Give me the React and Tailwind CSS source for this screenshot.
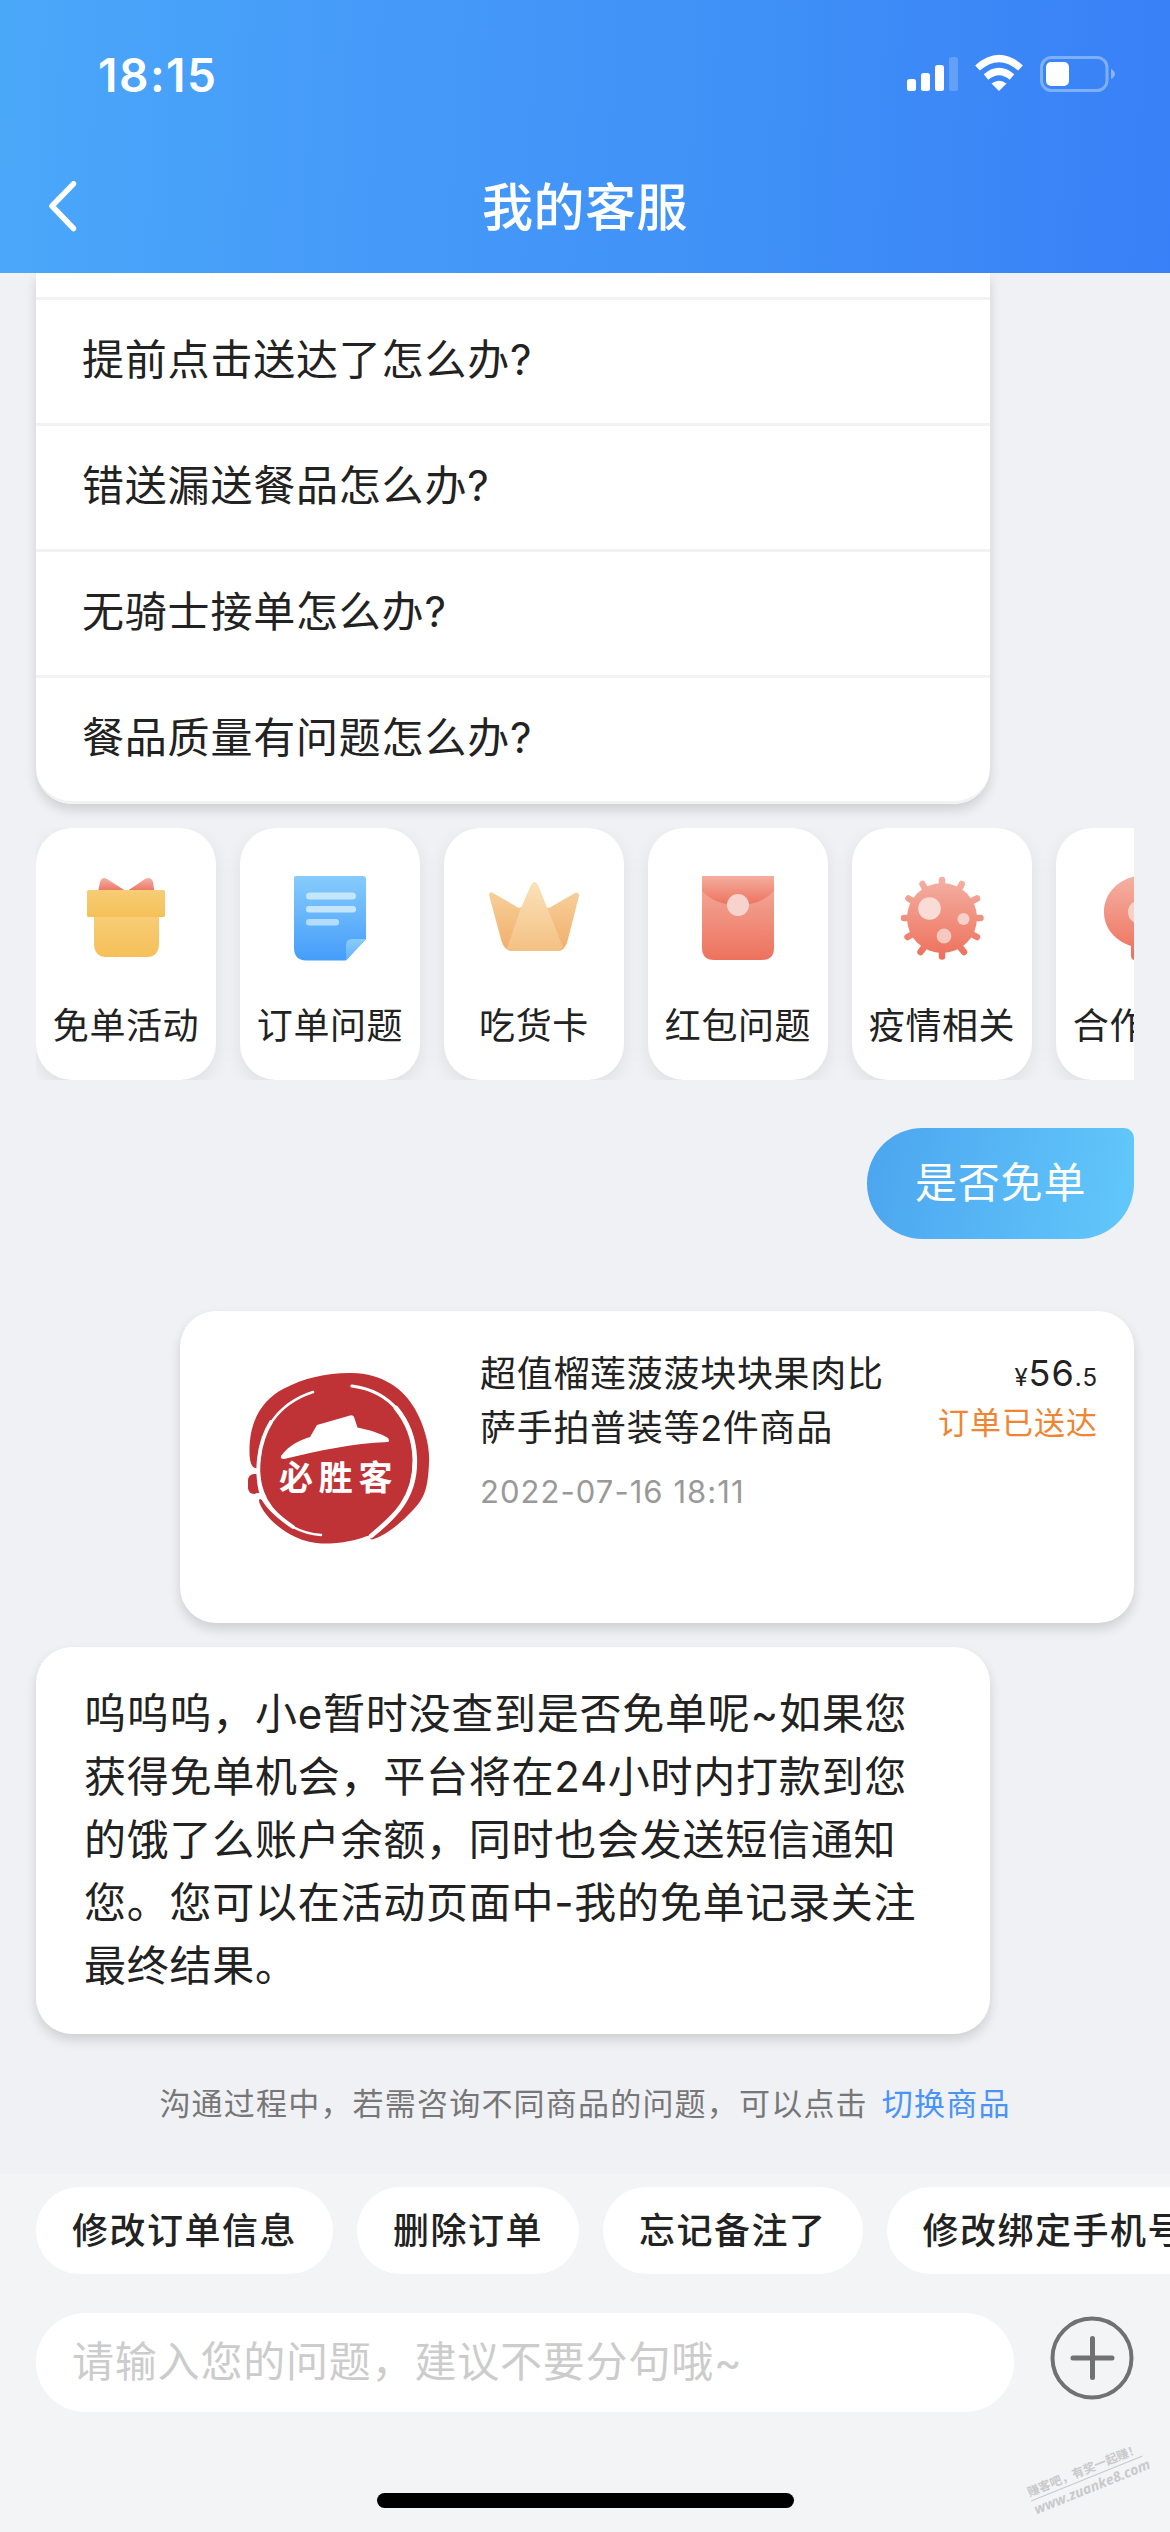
function Grad({ id, from, to }) {
  return (
    <linearGradient id={id} x1="0" y1="0" x2="0" y2="1">
      <stop offset="0" stopColor={from} />
      <stop offset="1" stopColor={to} />
    </linearGradient>
  );
}

function GiftIcon() {
  return (
    <svg className="size-[108px]" viewBox="0 0 108 108">
      <defs>
        <Grad id="bow" from="#f4b0a4" to="#ea705c" />
        <Grad id="lid" from="#f7cd76" to="#f5c058" />
      </defs>
      <path d="M26 38L28 28Q30 22 35 25L54.500 37.500L73 25Q79 22 81 28L82.500 38Z" fill="url(#bow)" />
      <path d="M22 62H87V91Q86 103 75 103H34Q23 103 22 91Z" fill="url(#lid)" />
      <rect x="15" y="36" width="78" height="27" rx="1.500" fill="url(#lid)" />
    </svg>
  );
}

function OrderIcon() {
  return (
    <svg className="size-[108px]" viewBox="0 0 108 108">
      <defs>
        <Grad id="doc" from="#86cbfc" to="#449dfa" />
        <Grad id="fold" from="#8acbfb" to="#62b3fb" />
      </defs>
      <path d="M20 22H87Q90 22 90 25V85L70 106.500H30Q18 106 18 94V24Q18 22 20 22Z" fill="url(#doc)" />
      <path d="M90 85L70 106V91Q70 85 76 85Z" fill="url(#fold)" />
      <rect x="30" y="38.500" width="50" height="7" rx="3.500" fill="#c4e6fc" />
      <rect x="30" y="52" width="50" height="6.500" rx="3" fill="#c4e6fc" />
      <rect x="30" y="65" width="33" height="6.500" rx="3" fill="#b4dcfc" />
    </svg>
  );
}

function CrownIcon() {
  return (
    <svg className="size-[108px]" viewBox="0 0 108 108">
      <defs>
        <Grad id="crownSide" from="#f6cf9a" to="#f2ae6a" />
        <Grad id="crownMid" from="#fae2b8" to="#f4c084" />
      </defs>
      <path d="M9 41Q9.500 37 13 39L38 53.500Q41 55 44 50L64 50Q67 55 70 53.500L95 39Q99.500 37.500 99 42L87.500 87Q85 97 77 97H32Q24.500 96.500 21.500 87Z" fill="url(#crownSide)" />
      <path d="M51 31Q54.500 25 58 31L83 93Q80.500 97 76 97H33Q29 97 27 94L41 54Z" fill="url(#crownMid)" />
    </svg>
  );
}

function PacketIcon() {
  return (
    <svg className="size-[108px]" viewBox="0 0 108 108">
      <defs>
        <Grad id="packet" from="#f4ae9f" to="#ed725d" />
      </defs>
      <path d="M18 22H90V94Q90 106 78 106H30Q18 106 18 94Z" fill="url(#packet)" />
      <path d="M18 22H90V37Q77 51 54 51Q31 51 18 37Z" fill="url(#packet)" />
      <circle cx="54" cy="51" r="11" fill="#f7d3cd" />
    </svg>
  );
}

function VirusIcon() {
  return (
    <svg className="size-[108px]" viewBox="0 0 108 108">
      <defs>
        <linearGradient id="virus" gradientUnits="userSpaceOnUse" x1="0" y1="22" x2="0" y2="106">
          <stop offset="0" stopColor="#f4b2a5" />
          <stop offset="1" stopColor="#ed6f59" />
        </linearGradient>
      </defs>
      <g stroke="url(#virus)" strokeWidth="6.500" strokeLinecap="round">
        <path d="M54.010 26V102.500M16 64H92.500M34.500 30L40 40M73.800 30L68.500 40M20.500 44.500L30 50M89 44.500L78 50M19.500 83L30 77M89 83L78 77M32.500 98L40 88M76 98L68 88" />
      </g>
      <circle cx="54" cy="64" r="35" fill="url(#virus)" />
      <circle cx="41.500" cy="54.500" r="11.300" fill="#f9dcd6" />
      <circle cx="75.500" cy="65" r="6" fill="#f7d0c8" />
      <circle cx="56" cy="82" r="7.400" fill="#f6c8bf" />
    </svg>
  );
}

function PartnerIcon() {
  return (
    <svg className="size-[108px]" viewBox="0 0 108 108">
      <defs>
        <Grad id="partner" from="#f4b2a5" to="#ed6f59" />
      </defs>
      <path d="M54 21C30 21 12 37 12 58C12 75 24 87 39 92V101Q39 107 45 106L60 95C82 93 96 77 96 58C96 37 78 21 54 21Z" fill="url(#partner)" />
      <circle cx="48" cy="58" r="9" fill="none" stroke="#f7d0c8" strokeWidth="6" />
    </svg>
  );
}

function StoreLogo() {
  return (
    <svg className="ml-[66px] mt-[60px] h-[174px] w-[185px] shrink-0" viewBox="0 0 185 174">
      <g fill="#bf3337">
        <path d="M103 2C135 1 158 18 169 38C179 56 184 76 183 92C182 116 179 127 167 139C154 153 139 165 126 168.500Q122 168 125 165L121 165C108 170 92 173 75 172.500C46 171 20 149 13.500 132Q12 126 16 129L12 97Q3 99 3.500 78C4 45 20 27 37 18C58 7 80 2 103 2Z" />
        <rect x="2" y="103" width="14" height="20" rx="6" />
      </g>
      <g fill="none" stroke="#fff" strokeLinecap="round">
        <path d="M67 21C30 33 13 62 12.500 96C13 121 22 139 47 156Q60 163 75 164" strokeWidth="2.500" />
        <path d="M25 51C12 72 9 102 16 125Q22 139 47 156" strokeWidth="3.800" />
        <path d="M106 15C145 20 168 50 168.500 87C169 122 154 144 125 165" strokeWidth="3.200" />
        <path d="M150 37C174 66 174 108 156 134Q148 146 125 165" strokeWidth="4.600" />
        <path d="M5 100H12M9 125L12 124" strokeWidth="4" />
      </g>
      <path d="M35 85C43 74 54 69 64 66L71 54L104 44.500Q107 43.500 108 46L111.500 56.500C123 59 134 62 142 67Q144 70 142 71C106 72 73 80 38 88Q34 88 35 85Z" fill="#fff" />
      <text x="33" y="119" fill="#fff" fontSize="34" fontWeight="700" letterSpacing="5.800" fontFamily="Noto Sans CJK SC">必胜客</text>
    </svg>
  );
}

const questions = ["提前点击送达了怎么办?", "错送漏送餐品怎么办?", "无骑士接单怎么办?", "餐品质量有问题怎么办?"];

const topics = [
  { label: "免单活动", Icon: GiftIcon },
  { label: "订单问题", Icon: OrderIcon },
  { label: "吃货卡", Icon: CrownIcon },
  { label: "红包问题", Icon: PacketIcon },
  { label: "疫情相关", Icon: VirusIcon },
  { label: "合作咨询", Icon: PartnerIcon },
];

const replyLines = [
  "呜呜呜，小e暂时没查到是否免单呢~如果您",
  "获得免单机会，平台将在24小时内打款到您",
  "的饿了么账户余额，同时也会发送短信通知",
  "您。您可以在活动页面中-我的免单记录关注",
  "最终结果。",
];

const chips = ["修改订单信息", "删除订单", "忘记备注了", "修改绑定手机号"];

function StatusBar() {
  return (
    <div className="flex h-[141px] justify-between pl-[98px] pr-[55px]">
      <div className="mt-[47px] text-[46px] font-semibold leading-[56px] tracking-[1.500px]">18:15</div>
      <svg className="mt-[52px] h-[44px] w-[212px]" viewBox="903 52 212 44">
        <g fill="#fff">
          <rect x="907" y="79" width="9" height="12" rx="2.500" />
          <rect x="921" y="73" width="9" height="18" rx="2.500" />
          <rect x="935" y="65" width="9" height="26" rx="2.500" />
          <rect x="949" y="57" width="9" height="34" rx="2.500" opacity="0.200" />
          <rect x="1046" y="62" width="23" height="24" rx="5" />
          <path d="M1111 69Q1115 71 1115 74Q1115 77 1111 79Z" opacity="0.400" />
          <path d="M999 91L991.500 83.500Q999 78 1006.500 83.500Z" />
        </g>
        <rect x="1041.500" y="57.500" width="65.500" height="33" rx="10" fill="none" stroke="#fff" strokeOpacity="0.350" strokeWidth="3" />
        <path d="M977.500 68Q999 49 1020.500 68M986 77Q999 66 1012 77" fill="none" stroke="#fff" strokeWidth="7" />
      </svg>
    </div>
  );
}

export default function App() {
  return (
    <div className='relative flex h-[2532px] w-[1170px] flex-col overflow-hidden bg-[#f0f1f5] font-["Inter","Noto_Sans_CJK_SC",sans-serif] text-[#222]' lang="zh-CN">
      <header className="relative z-10 h-[273px] shrink-0 bg-linear-[93deg,#4aa8f9,#469bf9_30%,#4092f7_60%,#3880f7] text-white">
        <StatusBar />
        <div className="grid h-[132px] grid-cols-[1fr_auto_1fr] items-center">
          <svg className="ml-[48px] h-[52px] w-[30px]" viewBox="0 0 30 52">
            <path d="M25.500 2.800L4 25L25.500 47.500" fill="none" stroke="#fff" strokeWidth="5.500" strokeLinecap="round" strokeLinejoin="round" />
          </svg>
          <h1 className="pt-[2px] text-[51px] font-medium leading-[130px] tracking-[0.500px]">我的客服</h1>
        </div>
      </header>

      <main className="flex h-[1901px] shrink-0 flex-col px-[36px]">
        <section className="w-[954px] rounded-b-[36px] bg-white pt-[24px] shadow-[0_6px_12px_rgba(0,0,0,0.14)]">
          <ul className="overflow-hidden rounded-b-[36px] border-b-[3px] border-[#f2f2f2]">
            {questions.map((q) => (
              <li key={q} className="h-[126px] border-t-[3px] border-[#f2f2f2] pl-[46px] text-[42px] leading-[120px] tracking-[0.800px]">{q}</li>
            ))}
          </ul>
        </section>

        <section className="mt-[24px] flex h-[252px] shrink-0 gap-[24px] overflow-hidden">
          {topics.map(({ label, Icon }) => (
            <div key={label} className="flex w-[180px] shrink-0 flex-col items-center rounded-[36px] bg-white pt-[26px] shadow-[0_6px_18px_rgba(0,0,0,0.08)]">
              <Icon />
              <span className="mt-[37px] whitespace-nowrap text-[36px] leading-[54px] tracking-[0.600px]">{label}</span>
            </div>
          ))}
        </section>

        <div className="mt-[48px] h-[111px] w-[267px] shrink-0 self-end rounded-[56px] rounded-tr-[10px] bg-linear-[100deg,#4ca5ef,#62c8fb] pl-[48px] text-[42px] leading-[109px] tracking-[0.800px] text-white">是否免单</div>

        <section className="mt-[72px] flex h-[312px] w-[954px] shrink-0 self-end rounded-[36px] bg-white shadow-[0_6px_12px_rgba(0,0,0,0.14)]">
          <StoreLogo />
          <div className="ml-[49px] mt-[36px]">
            <p className="whitespace-nowrap text-[36px] leading-[54px] tracking-[0.700px]">超值榴莲菠菠块块果肉比<br />萨手拍普装等2件商品</p>
            <p className="mt-[13px] text-[31px] leading-[48px] tracking-[1.050px] text-[#999]">2022-07-16 18:11</p>
          </div>
          <div className="ml-auto mr-[36px] mt-[38px] text-right">
            <p className="text-[24px] leading-[48px] tracking-[1px]">¥<span className="text-[36px]">56</span>.5</p>
            <p className="text-[31px] leading-[42px] tracking-[1px] text-[#ef8432]">订单已送达</p>
          </div>
        </section>

        <section className="mt-[24px] h-[387px] w-[954px] shrink-0 rounded-[36px] bg-white pl-[48px] pt-[35px] text-[42px] leading-[63px] tracking-[0.750px] shadow-[0_6px_12px_rgba(0,0,0,0.14)]">
          {replyLines.map((line) => (
            <p key={line} className="whitespace-nowrap">{line}</p>
          ))}
        </section>

        <p className="mt-[47px] flex justify-center gap-[14px] whitespace-nowrap text-[31px] leading-[46px] tracking-[1.200px] text-[#777]">
          沟通过程中，若需咨询不同商品的问题，可以点击
          <a className="text-[#4a94f7]">切换商品</a>
        </p>
      </main>

      <footer className="flex grow flex-col bg-[#f3f4f6] pt-[13px]">
        <div className="flex gap-[24px] overflow-hidden pl-[36px]">
          {chips.map((c) => (
            <button key={c} className="h-[87px] shrink-0 rounded-full bg-white px-[36px] pt-[2px] text-[36px] font-medium leading-[85px] tracking-[1.500px]">{c}</button>
          ))}
        </div>
        <div className="mt-[39px] flex px-[36px]">
          <div className="h-[99px] w-[978px] rounded-full bg-white pl-[36px] text-[42px] leading-[98px] tracking-[0.800px] text-[#ccc]">请输入您的问题，建议不要分句哦~</div>
          <svg className="ml-auto mt-[3px] size-[84px]" viewBox="0 0 84 84">
            <g fill="none" stroke="#717171" strokeLinecap="round">
              <circle cx="42" cy="42" r="39.500" strokeWidth="4" />
              <path d="M42.500 22.500V61.500M23 42H62" strokeWidth="5" />
            </g>
          </svg>
        </div>
        <div className="mx-auto mt-[81px] h-[15px] w-[417px] rounded-full bg-black" />
      </footer>

      <div className='absolute left-[1027px] top-[2461px] w-[120px] -rotate-[22deg] whitespace-nowrap font-["Open_Sans","Noto_Sans_CJK_SC",sans-serif] font-bold text-[#c9c9cb]'>
        <div className="border-b border-[#c9c9cb] text-[12px] leading-[17px]">赚客吧，有奖一起赚！</div>
        <div className="text-[14px] italic leading-[18px]">www.zuanke8.com</div>
      </div>
    </div>
  );
}
